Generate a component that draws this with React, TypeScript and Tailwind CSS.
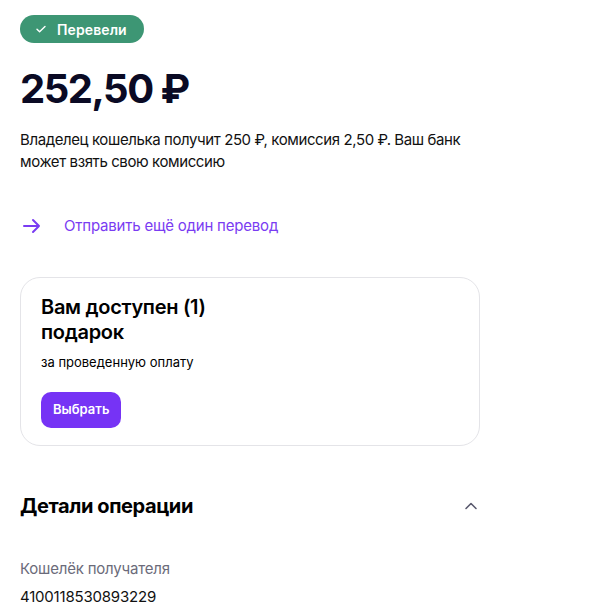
import React from "react";

function Check() {
  return (
    <svg width="12" height="12" viewBox="0 0 12 12" fill="none">
      <path d="M2 6.2l2.6 2.6L10 3.4" stroke="white" strokeWidth="1.4" strokeLinecap="round" strokeLinejoin="round" />
    </svg>
  );
}

function Arrow() {
  return (
    <svg width="20" height="20" viewBox="0 0 20 20" fill="none">
      <path d="M2 10h15M11 4l6 6-6 6" stroke="#7a3cf2" strokeWidth="2" strokeLinecap="round" strokeLinejoin="round" />
    </svg>
  );
}

function ChevronUp() {
  return (
    <svg width="14" height="14" viewBox="0 0 14 14" fill="none">
      <path d="M2 9.5l5-5 5 5" stroke="#5a5a6e" strokeWidth="1.6" strokeLinecap="round" strokeLinejoin="round" />
    </svg>
  );
}

export default function App() {
  return (
    <div className="min-h-screen bg-white text-[#0b0b1f] font-['Inter',sans-serif]">
      <div className="w-[460px] ml-[20px] pt-[15px] flex flex-col">
        {/* status */}
        <div className="self-start h-[28px] pl-[15px] pr-[17px] rounded-full bg-[#3d9674] flex items-center gap-[10px]">
          <Check />
          <span className="text-[14px] font-semibold text-white tracking-[0.1px]">Перевели</span>
        </div>

        <div className="mt-[22px] text-[40px] leading-[48px] font-bold text-[#0a0a24] tracking-[-1.5px]">252,50 ₽</div>

        <p className="mt-[16px] text-[15px] leading-[22px] text-[#111] tracking-[-0.4px]">
          Владелец кошелька получит 250 ₽, комиссия 2,50 ₽. Ваш банк может взять свою комиссию
        </p>

        <a href="#" className="mt-[42px] flex items-center gap-[22px] pl-[2px]">
          <Arrow />
          <span className="text-[15px] text-[#7a3cf2] tracking-[-0.2px]">Отправить ещё один перевод</span>
        </a>

        {/* gift card */}
        <div className="mt-[39px] rounded-[20px] border border-[#e4e4e8] px-[20px] pt-[17px] pb-[17px]">
          <h3 className="w-[200px] text-[20px] leading-[25px] font-semibold text-black tracking-[-0.3px]">
            Вам доступен (1) подарок
          </h3>
          <p className="mt-[8px] text-[13px] leading-[18px] text-black">за проведенную оплату</p>
          <button className="mt-[21px] h-[36px] px-[12px] rounded-[10px] bg-[#7633f5] text-white text-[13px] font-semibold">
            Выбрать
          </button>
        </div>

        {/* details */}
        <div className="mt-[46px] flex items-center justify-between">
          <h2 className="text-[20px] leading-[28px] font-bold text-black tracking-[-0.4px]">Детали операции</h2>
          <div className="mr-[2px]">
            <ChevronUp />
          </div>
        </div>

        <div className="mt-[38px] text-[15px] leading-[22px] text-[#6b6b7a] tracking-[-0.2px]">Кошелёк получателя</div>
        <div className="mt-[6px] text-[15px] leading-[22px] text-[#111] tracking-[-0.2px]">4100118530893229</div>
      </div>
    </div>
  );
}
